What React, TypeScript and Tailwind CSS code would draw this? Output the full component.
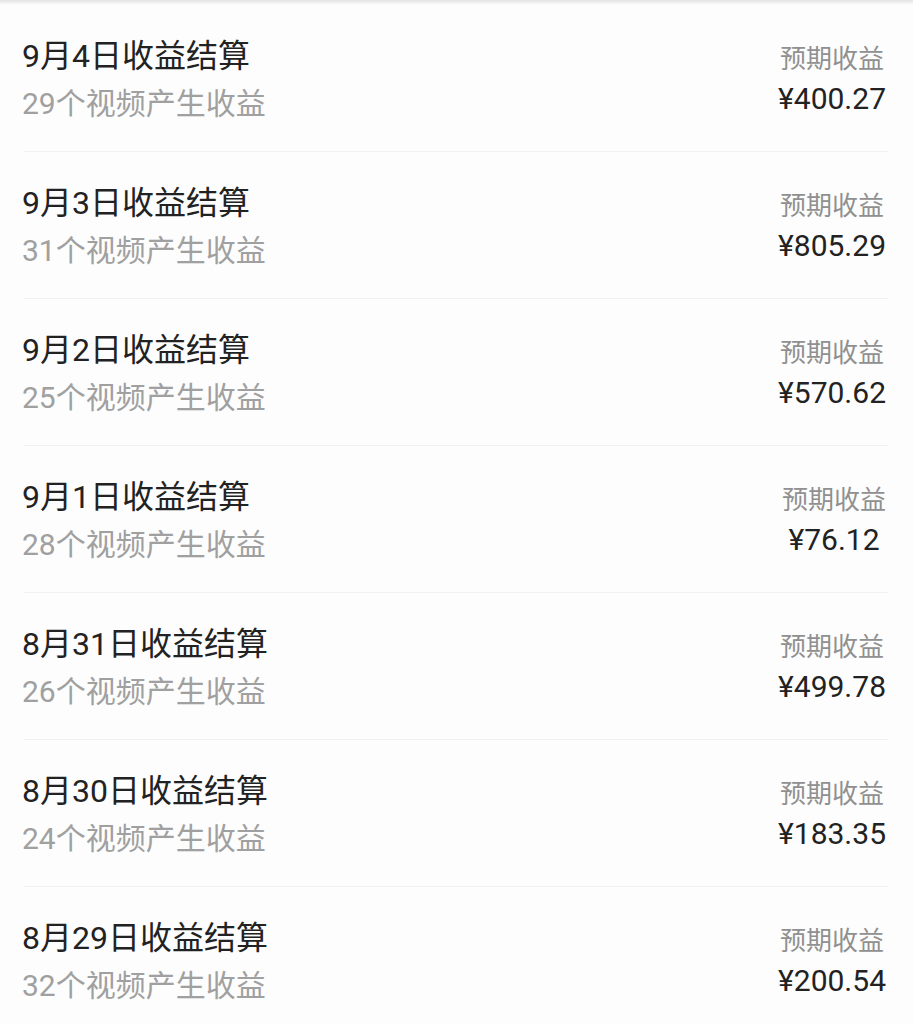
const rows = [
  { date: "9月4日", videos: 29, amount: "400.27" },
  { date: "9月3日", videos: 31, amount: "805.29" },
  { date: "9月2日", videos: 25, amount: "570.62" },
  { date: "9月1日", videos: 28, amount: "76.12" },
  { date: "8月31日", videos: 26, amount: "499.78" },
  { date: "8月30日", videos: 24, amount: "183.35" },
  { date: "8月29日", videos: 32, amount: "200.54" },
];

function Row({ date, videos, amount }: { date: string; videos: number; amount: string }) {
  return (
    <div className="h-[146px] flex items-center justify-between pl-[22px] pr-[27px]">
      <div className="flex flex-col pt-1">
        <span className="text-[32px] leading-[36px] text-[#222222]">{date}收益结算</span>
        <span className="mt-3 text-[30px] leading-[36px] text-[#a0a0a0]">{videos}个视频产生收益</span>
      </div>
      <div className="flex flex-col items-center pt-1">
        <span className="text-[26px] leading-[30px] text-[#909090]">预期收益</span>
        <span className="mt-2 text-[30px] leading-[34px] text-[#222222]">¥{amount}</span>
      </div>
    </div>
  );
}

export default function App() {
  return (
    <div
      className="min-h-screen w-full bg-[#fdfdfd] overflow-hidden"
      style={{ fontFamily: 'Roboto, "Noto Sans CJK SC", sans-serif' }}
    >
      <div className="h-[5px] bg-gradient-to-b from-[#e4e4e4] to-[#fdfdfd]" />
      {rows.map((r, i) => (
        <div key={r.date}>
          {i > 0 && <div className="h-px bg-[#f1f1f1] ml-6 mr-[25px]" />}
          <Row {...r} />
        </div>
      ))}
    </div>
  );
}
